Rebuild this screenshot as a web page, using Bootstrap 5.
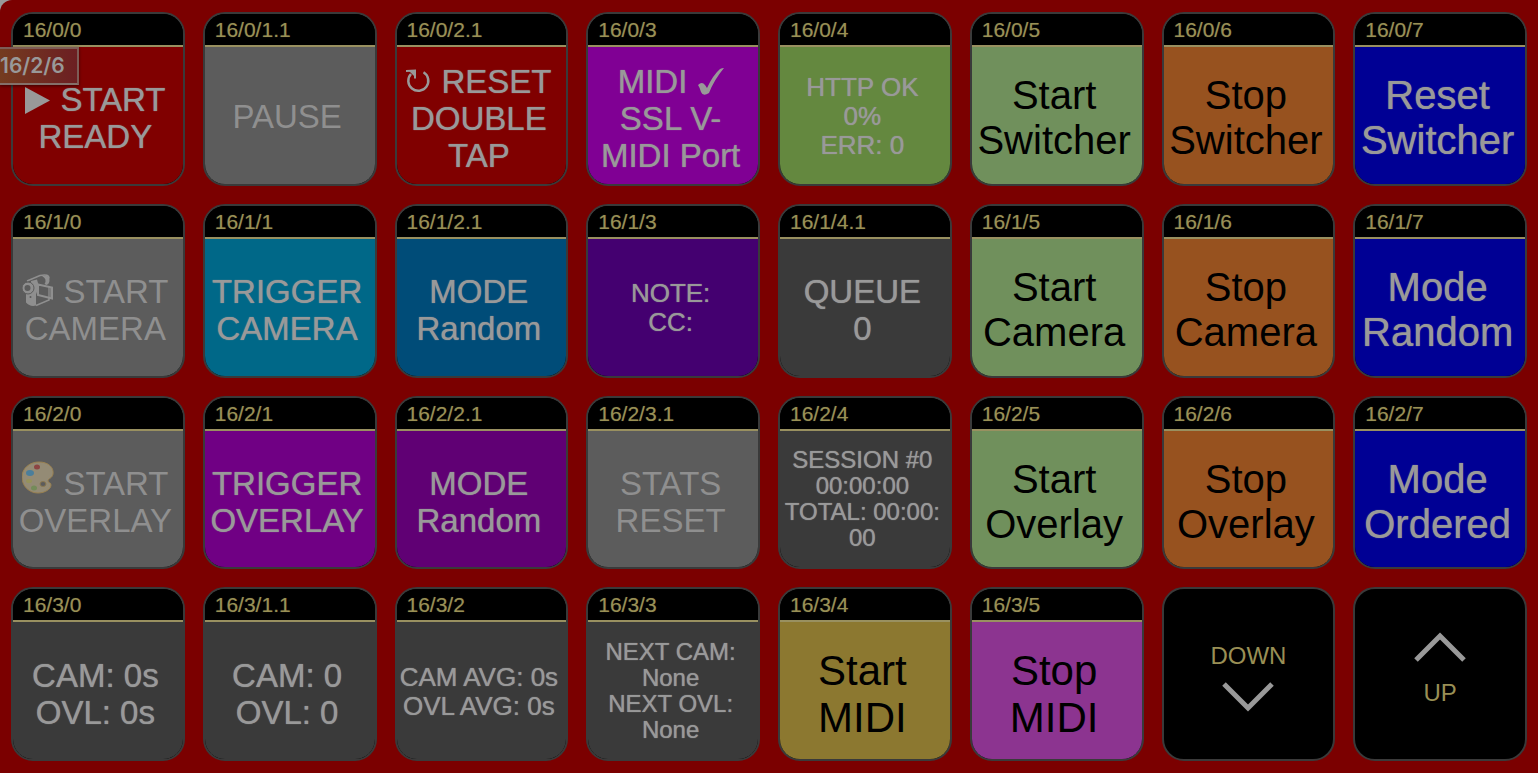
<!DOCTYPE html>
<html lang="en">
<head>
<meta charset="utf-8">
<meta name="viewport" content="width=device-width, initial-scale=1">
<title>Button deck – page 16</title>
<link href="https://cdn.jsdelivr.net/npm/bootstrap@5.3.0/dist/css/bootstrap.min.css" rel="stylesheet">
<style>
body{background:#999;font-family:"Liberation Sans","DejaVu Sans",sans-serif;overflow-x:hidden}
.deck{background:#7b0000;border-top-left-radius:12px;min-height:100vh;padding:12px 11px}
.deck-grid{display:grid;grid-template-columns:repeat(8,minmax(0,1fr));gap:18px}
.key{aspect-ratio:1;border:2px solid #3a3a3a;border-radius:22px;background:#000;color:#999;padding:0;overflow:hidden;min-height:0}
.key-id{height:33px;border-bottom:2px solid #999060;background:#000;color:#999055;font-size:21px;line-height:31px;text-align:left;padding-left:10px;text-shadow:0 0 1px #99905580}
.key-face{min-height:0;padding:6px 5px 0 0;font-size:33px;line-height:37px;white-space:nowrap;text-shadow:0 0 1px currentColor}
.key-lg{font-size:40px;line-height:45px}
.key-xl{font-size:42px;line-height:47px}
.key-md{font-size:26px;line-height:29px;padding-top:2px}
.key-sm{font-size:24px;line-height:26px;padding-top:1px}
.key-single{padding-top:2px}
.key-dark{color:#000;text-shadow:none}
.key-dim{color:#8f8f8f;text-shadow:none}
.key-nav{color:#998f55;font-size:24px;line-height:26px}
.key-down{gap:13px;padding-top:6px}
.key-up{gap:18px;padding-bottom:10px}
.f-red{background:#800000}.f-grey{background:#5c5c5c}.f-midi{background:#800094}.f-http{background:#64883f}
.f-green{background:#70905c}.f-orange{background:#97521f}.f-blue{background:#000094}.f-cyan{background:#006888}
.f-sea{background:#004c78}.f-indigo{background:#440070}.f-coal{background:#3a3a3a}.f-trig{background:#700084}
.f-mode{background:#600074}.f-gold{background:#8c7830}.f-pink{background:#8c3490}
.tip{left:0;top:47px;padding:0 12px 0 0;height:38px;border:2px solid #7d5c56;border-left:0;border-bottom-color:#85706a;background:linear-gradient(90deg,#743c20,#6f2a22 60%,#6c1f22);color:#999;font:600 21px/33px Inter,sans-serif;box-shadow:0 1px 3px #0008}
svg{vertical-align:baseline}
.glyph-low{vertical-align:-4px}
.glyph-high{margin-top:-8px;vertical-align:1px}
</style>
</head>
<body>
<main class="deck position-relative">
<div class="deck-grid">
<button class="key d-flex flex-column"><span class="key-id w-100">16/0/0</span><span class="key-face f-red flex-fill w-100 d-flex align-items-center justify-content-center"><span><svg class="glyph-low" width="26" height="28" viewBox="0 0 26 28" fill="currentColor"><path d="M0 0 25 13.500 0 27Z"/></svg> START<br>READY</span></span></button>
<button class="key d-flex flex-column"><span class="key-id w-100">16/0/1.1</span><span class="key-face key-single key-dim f-grey flex-fill w-100 d-flex align-items-center justify-content-center">PAUSE</span></button>
<button class="key d-flex flex-column"><span class="key-id w-100">16/0/2.1</span><span class="key-face f-red flex-fill w-100 d-flex align-items-center justify-content-center"><span><svg width="26" height="24" viewBox="0 0 26 24" fill="none" stroke="currentColor" stroke-width="2.500"><path d="M17.500 3.300A10 10 0 1 1 5 5"/><path d="M0 2 9 1.500V9.500" stroke-width="2"/><path d="M3 2H9V8Z" fill="currentColor" stroke="none"/></svg> RESET<br>DOUBLE<br>TAP</span></span></button>
<button class="key d-flex flex-column"><span class="key-id w-100">16/0/3</span><span class="key-face f-midi flex-fill w-100 d-flex align-items-center justify-content-center"><span>MIDI <svg class="glyph-low" width="27" height="30" viewBox="0 0 27 30" fill="currentColor"><path d="M1 18q4-4 7 0l2 3Q16 8 23 2q2-1 4-1Q17 13 12 26q-6 4-8-1-1-4-3-7Z"/></svg><br>SSL V-<br>MIDI Port</span></span></button>
<button class="key d-flex flex-column"><span class="key-id w-100">16/0/4</span><span class="key-face key-md f-http flex-fill w-100 d-flex align-items-center justify-content-center"><span>HTTP OK<br>0%<br>ERR: 0</span></span></button>
<button class="key d-flex flex-column"><span class="key-id w-100">16/0/5</span><span class="key-face key-lg key-dark f-green flex-fill w-100 d-flex align-items-center justify-content-center"><span>Start<br>Switcher</span></span></button>
<button class="key d-flex flex-column"><span class="key-id w-100">16/0/6</span><span class="key-face key-lg key-dark f-orange flex-fill w-100 d-flex align-items-center justify-content-center"><span>Stop<br>Switcher</span></span></button>
<button class="key d-flex flex-column"><span class="key-id w-100">16/0/7</span><span class="key-face key-lg f-blue flex-fill w-100 d-flex align-items-center justify-content-center"><span>Reset<br>Switcher</span></span></button>

<button class="key d-flex flex-column"><span class="key-id w-100">16/1/0</span><span class="key-face key-dim f-grey flex-fill w-100 d-flex align-items-center justify-content-center"><span><svg class="glyph-low" width="32" height="33" viewBox="0 0 32 33" fill="none" stroke="currentColor" stroke-width="1.500"><path d="M5 7 18 1.500q9-2 9 3"/><path d="M20 2q7-2 7.500 4 0 4-3 5l-2-1q3-5-2.500-8Z" fill="currentColor" stroke="none"/><path d="M9 7l6-1.500 2 7-3 8H9Z" fill="currentColor" stroke="none"/><path d="M4 17h10v14.500q-6 1.500-10-3Z" fill="currentColor" stroke="none"/><path d="M14 31.500 27 26v-3"/><path d="M16 10.500 30 13.500v11L16 21Z" stroke-width="2"/><path d="M26 13l4 1v10l-4-1Z" fill="currentColor" stroke="none" opacity=".6"/><circle cx="6" cy="14" r="6" fill="currentColor" stroke="#5c5c5c" stroke-width="1"/><circle cx="5.500" cy="14" r="3" fill="#5c5c5c" stroke="none"/><circle cx="8.500" cy="23" r="1" fill="#5c5c5c" stroke="none"/></svg> START<br>CAMERA</span></span></button>
<button class="key d-flex flex-column"><span class="key-id w-100">16/1/1</span><span class="key-face f-cyan flex-fill w-100 d-flex align-items-center justify-content-center"><span>TRIGGER<br>CAMERA</span></span></button>
<button class="key d-flex flex-column"><span class="key-id w-100">16/1/2.1</span><span class="key-face f-sea flex-fill w-100 d-flex align-items-center justify-content-center"><span>MODE<br>Random</span></span></button>
<button class="key d-flex flex-column"><span class="key-id w-100">16/1/3</span><span class="key-face key-md f-indigo flex-fill w-100 d-flex align-items-center justify-content-center"><span>NOTE:<br>CC:</span></span></button>
<button class="key d-flex flex-column"><span class="key-id w-100">16/1/4.1</span><span class="key-face f-coal flex-fill w-100 d-flex align-items-center justify-content-center"><span>QUEUE<br>0</span></span></button>
<button class="key d-flex flex-column"><span class="key-id w-100">16/1/5</span><span class="key-face key-lg key-dark f-green flex-fill w-100 d-flex align-items-center justify-content-center"><span>Start<br>Camera</span></span></button>
<button class="key d-flex flex-column"><span class="key-id w-100">16/1/6</span><span class="key-face key-lg key-dark f-orange flex-fill w-100 d-flex align-items-center justify-content-center"><span>Stop<br>Camera</span></span></button>
<button class="key d-flex flex-column"><span class="key-id w-100">16/1/7</span><span class="key-face key-lg f-blue flex-fill w-100 d-flex align-items-center justify-content-center"><span>Mode<br>Random</span></span></button>

<button class="key d-flex flex-column"><span class="key-id w-100">16/2/0</span><span class="key-face key-dim f-grey flex-fill w-100 d-flex align-items-center justify-content-center"><span><svg class="glyph-high" width="32" height="33" viewBox="0 0 32 33" fill="none"><path d="M17 1C27 1 32 7 31 13c-1 5-5 4-5 7 0 2 3 1 3 4 0 4-6 8-13 8C7 32 0 25 0 16 0 7 8 1 17 1Z" fill="#948b75" stroke="#9a8150"/><ellipse cx="15" cy="6" rx="3" ry="2.500" fill="#8d4543"/><ellipse cx="8" cy="12" rx="4" ry="3" fill="#4b7e9b"/><ellipse cx="7" cy="20" rx="3" ry="2" fill="#96925b"/><ellipse cx="12" cy="27" rx="3" ry="2.500" fill="#748b59"/><ellipse cx="21" cy="23" rx="3" ry="2.500" fill="#5c5c5c" stroke="#8b7950"/></svg> START<br>OVERLAY</span></span></button>
<button class="key d-flex flex-column"><span class="key-id w-100">16/2/1</span><span class="key-face f-trig flex-fill w-100 d-flex align-items-center justify-content-center"><span>TRIGGER<br>OVERLAY</span></span></button>
<button class="key d-flex flex-column"><span class="key-id w-100">16/2/2.1</span><span class="key-face f-mode flex-fill w-100 d-flex align-items-center justify-content-center"><span>MODE<br>Random</span></span></button>
<button class="key d-flex flex-column"><span class="key-id w-100">16/2/3.1</span><span class="key-face key-dim f-grey flex-fill w-100 d-flex align-items-center justify-content-center"><span>STATS<br>RESET</span></span></button>
<button class="key d-flex flex-column"><span class="key-id w-100">16/2/4</span><span class="key-face key-sm f-coal flex-fill w-100 d-flex align-items-center justify-content-center"><span>SESSION #0<br>00:00:00<br>TOTAL: 00:00:<br>00</span></span></button>
<button class="key d-flex flex-column"><span class="key-id w-100">16/2/5</span><span class="key-face key-lg key-dark f-green flex-fill w-100 d-flex align-items-center justify-content-center"><span>Start<br>Overlay</span></span></button>
<button class="key d-flex flex-column"><span class="key-id w-100">16/2/6</span><span class="key-face key-lg key-dark f-orange flex-fill w-100 d-flex align-items-center justify-content-center"><span>Stop<br>Overlay</span></span></button>
<button class="key d-flex flex-column"><span class="key-id w-100">16/2/7</span><span class="key-face key-lg f-blue flex-fill w-100 d-flex align-items-center justify-content-center"><span>Mode<br>Ordered</span></span></button>

<button class="key d-flex flex-column"><span class="key-id w-100">16/3/0</span><span class="key-face f-coal flex-fill w-100 d-flex align-items-center justify-content-center"><span>CAM: 0s<br>OVL: 0s</span></span></button>
<button class="key d-flex flex-column"><span class="key-id w-100">16/3/1.1</span><span class="key-face f-coal flex-fill w-100 d-flex align-items-center justify-content-center"><span>CAM: 0<br>OVL: 0</span></span></button>
<button class="key d-flex flex-column"><span class="key-id w-100">16/3/2</span><span class="key-face key-md f-coal flex-fill w-100 d-flex align-items-center justify-content-center"><span>CAM AVG: 0s<br>OVL AVG: 0s</span></span></button>
<button class="key d-flex flex-column"><span class="key-id w-100">16/3/3</span><span class="key-face key-sm f-coal flex-fill w-100 d-flex align-items-center justify-content-center"><span>NEXT CAM:<br>None<br>NEXT OVL:<br>None</span></span></button>
<button class="key d-flex flex-column"><span class="key-id w-100">16/3/4</span><span class="key-face key-xl key-dark f-gold flex-fill w-100 d-flex align-items-center justify-content-center"><span>Start<br>MIDI</span></span></button>
<button class="key d-flex flex-column"><span class="key-id w-100">16/3/5</span><span class="key-face key-xl key-dark f-pink flex-fill w-100 d-flex align-items-center justify-content-center"><span>Stop<br>MIDI</span></span></button>
<button class="key key-nav key-down d-flex flex-column align-items-center justify-content-center"><span>DOWN</span><svg width="52" height="30" viewBox="0 0 52 30" fill="none" stroke="#999" stroke-width="5"><path d="M2 2 26 26 50 2"/></svg></button>
<button class="key key-nav key-up d-flex flex-column align-items-center justify-content-center"><svg width="52" height="30" viewBox="0 0 52 30" fill="none" stroke="#999" stroke-width="5"><path d="M2 28 26 4 50 28"/></svg><span>UP</span></button>
</div>
<div class="tip position-absolute" role="tooltip">16/2/6</div>
</main>
<script src="https://cdn.jsdelivr.net/npm/bootstrap@5.3.0/dist/js/bootstrap.bundle.min.js"></script>
</body>
</html>
